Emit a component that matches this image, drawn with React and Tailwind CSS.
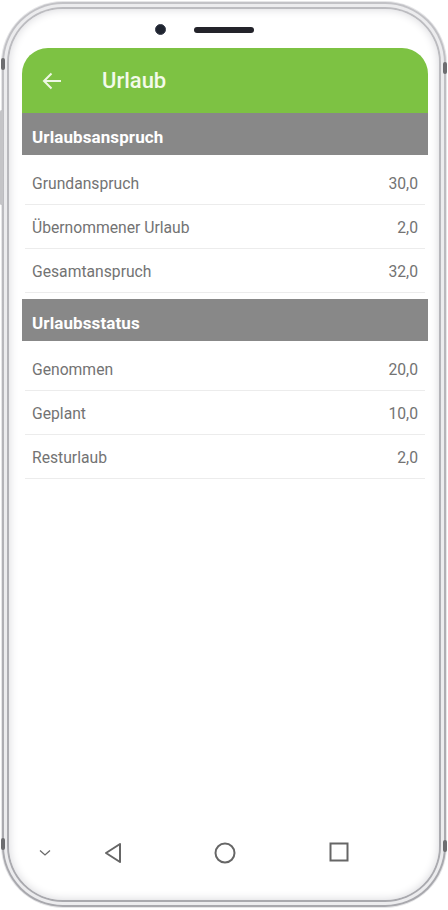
import React from "react";

const rowsA = [
  ["Grundanspruch", "30,0"],
  ["Übernommener Urlaub", "2,0"],
  ["Gesamtanspruch", "32,0"],
];
const rowsB = [
  ["Genommen", "20,0"],
  ["Geplant", "10,0"],
  ["Resturlaub", "2,0"],
];

function Section({ title, rows }) {
  return (
    <div>
      <div className="h-[42px] bg-[#888888] flex items-center px-[10px] pt-[8px]">
        <span className="text-white font-bold text-[17px] tracking-[0.1px]">{title}</span>
      </div>
      <div className="pt-[6px] pb-[6px] px-[3px]">
        {rows.map(([l, v]) => (
          <div key={l} className="h-[44px] flex items-center justify-between px-[7px] border-b border-[#ececec]">
            <span className="text-[15.7px] text-[#737373] pt-[3px]">{l}</span>
            <span className="text-[15.7px] text-[#737373] pt-[3px]">{v}</span>
          </div>
        ))}
      </div>
    </div>
  );
}

export default function App() {
  return (
    <div className="w-[448px] h-[910px] bg-white relative overflow-hidden" style={{ fontFamily: "Roboto, 'Liberation Sans', sans-serif" }}>
      {/* side buttons */}
      <div className="absolute left-[1px] top-[58px] w-[4px] h-[12px] bg-[#6d6d70] rounded-sm z-10" />
      <div className="absolute left-[0px] top-[110px] w-[3px] h-[95px] bg-[#c4c4c7] rounded-sm z-10" />
      <div className="absolute right-[1px] top-[62px] w-[4px] h-[12px] bg-[#6d6d70] rounded-sm z-10" />
      <div className="absolute left-[1px] top-[838px] w-[4px] h-[12px] bg-[#6d6d70] rounded-sm z-10" />
      <div className="absolute right-[1px] top-[840px] w-[4px] h-[12px] bg-[#6d6d70] rounded-sm z-10" />

      <div className="m-[1px] h-[907px] rounded-[62px] bg-[#e6e6e8] p-[1px]">
        <div className="h-full rounded-[61px] bg-gradient-to-b from-[#c2c2c6] via-[#b4b4b8] to-[#a8a8ad] p-[2px]">
          <div className="h-full rounded-[59px] bg-[#ececee] p-[3px]">
            <div className="h-full rounded-[56px] bg-gradient-to-b from-[#bcbcc0] to-[#a9a9ae] p-[2px]">
              <div className="h-full rounded-[54px] bg-white shadow-[inset_0_0_10px_#d6d6da] flex flex-col pl-[13px] pr-[11px] pt-[39px]">
                {/* camera + speaker overlay */}
                <div className="absolute left-[155px] top-[24px] w-[11px] h-[11px] rounded-full bg-[#1f2430] border border-[#3a3f4d]" />
                <div className="absolute left-[194px] top-[27px] w-[60px] h-[6px] rounded-full bg-[#23232a]" />

                <div className="flex-1 flex flex-col">
                  <div className="h-[65px] bg-[#7dc243] rounded-t-[26px] flex items-center">
                    <svg width="20" height="18" viewBox="0 0 20 18" className="ml-[20px]" fill="none" stroke="#eef7e4" strokeWidth="2">
                      <path d="M19 9H2M9.5 1.5L2 9l7.5 7.5" />
                    </svg>
                    <span className="ml-[40px] text-[22px] font-medium text-[#f3faea]">Urlaub</span>
                  </div>
                  <Section title="Urlaubsanspruch" rows={rowsA} />
                  <Section title="Urlaubsstatus" rows={rowsB} />
                  <div className="flex-1" />
                  <div className="h-[70px] relative">
                    <svg className="absolute left-[17px] top-[31px]" width="12" height="8" viewBox="0 0 12 8" fill="none" stroke="#6a6a6a" strokeWidth="1.3">
                      <path d="M1 1.5l5 4.5 5-4.5" />
                    </svg>
                    <svg className="absolute left-[81px] top-[24px]" width="22" height="22" viewBox="0 0 22 22" fill="none" stroke="#666" strokeWidth="2" strokeLinejoin="round">
                      <path d="M17 2L3 11l14 9z" />
                    </svg>
                    <svg className="absolute left-[192px] top-[24px]" width="22" height="22" viewBox="0 0 22 22" fill="none" stroke="#666" strokeWidth="2">
                      <circle cx="11" cy="11" r="9.5" />
                    </svg>
                    <svg className="absolute left-[307px] top-[24px]" width="20" height="20" viewBox="0 0 20 20" fill="none" stroke="#666" strokeWidth="2">
                      <rect x="1.5" y="1.5" width="17" height="17" />
                    </svg>
                  </div>
                  <div className="h-[12px]" />
                </div>
              </div>
            </div>
          </div>
        </div>
      </div>
    </div>
  );
}
